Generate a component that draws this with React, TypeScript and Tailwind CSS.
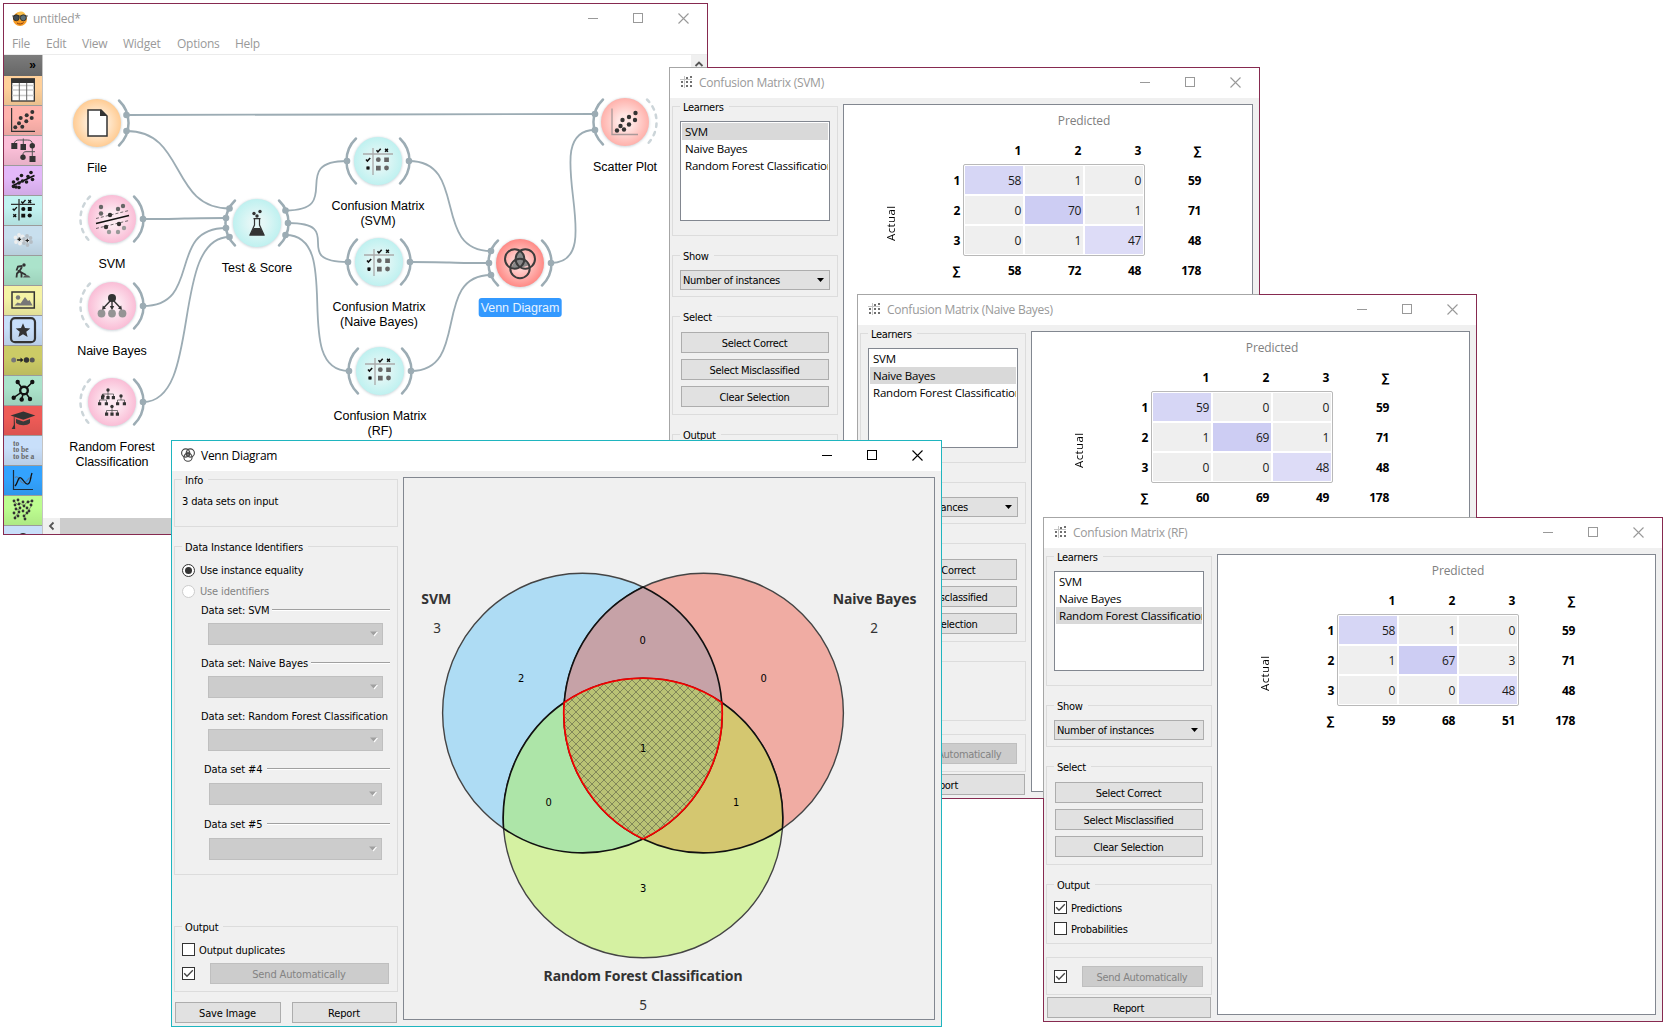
import React from "react";

const UI = "font-['DejaVu_Sans_Condensed','Noto_Sans',sans-serif] text-[11px] tracking-[-0.3px]";
const SEG = "font-['Open_Sans','Noto_Sans',sans-serif] text-[12px] tracking-[-0.26px]";

/* ---------- Shared controls ---------- */

function WindowControls() {
  return (
    <svg width="138" height="30" viewBox="0 0 138 30" className="ml-auto" fill="none" stroke="currentColor" shapeRendering="crispEdges">
      <path d="M19 14.5h10" />
      <rect x="64.5" y="9.5" width="9" height="9" />
      <path d="M109.5 9.5l10 10M119.5 9.5l-10 10" shapeRendering="auto" strokeWidth="1.1" />
    </svg>
  );
}

function Group({ title, className, children }: { title?: string; className: string; children?: React.ReactNode }) {
  return (
    <div className={`relative shrink-0 border border-[#dcdcdc] ${className}`}>
      {title && (
        <span className="absolute left-[7px] top-[-7px] bg-[#f0f0f0] pl-[3px] pr-[5px] leading-4 whitespace-nowrap">{title}</span>
      )}
      {children}
    </div>
  );
}

function Button({ children, className = "", disabled = false }: { children: React.ReactNode; className?: string; disabled?: boolean }) {
  return (
    <div
      className={`flex h-[21px] shrink-0 items-center justify-center border pt-[3px] pr-px ${
        disabled ? "border-[#bfbfbf] bg-[#cccccc] text-[#838383]" : "border-[#adadad] bg-[#e1e1e1]"
      } ${className}`}
    >
      {children}
    </div>
  );
}

function CheckBox({ checked = false }: { checked?: boolean }) {
  return (
    <span className="block size-[13px] shrink-0 border border-[#333] bg-white">
      {checked && (
        <svg viewBox="0 0 11 11" className="size-[11px]" fill="none" stroke="#444" strokeWidth="1.3">
          <path d="M1.2 5.3l2.8 3L9.8 2.2" />
        </svg>
      )}
    </span>
  );
}

/* ---------- Confusion matrix window ---------- */

function MatrixIcon() {
  return (
    <svg width="14" height="13" viewBox="0 0 14 13" fill="#707070" className="-mt-[2px]">
      <path d="M0 3.5h12M4.5 0v12" stroke="#c4c4c4" strokeWidth="1" />
      <path d="M6 1h2v2H6zM10 0h2v2h-2zM1 5h2v2H1zM6 5h2v2H6zM10 5h2v2h-2zM1 9h2v2H1zM6 9h2v2H6zM10 9h2v2h-2z" />
    </svg>
  );
}

const LEARNERS = ["SVM", "Naive Bayes", "Random Forest Classification"];
const DIAGONAL = ["bg-[#d6d6f5]", "bg-[#cdcdf3]", "bg-[#dddcf7]"];

function MatrixTable({ cells, sums }: { cells: number[][]; sums: number[] }) {
  const rowSums = [59, 71, 48];
  return (
    <div className="flex text-[12px] font-['Open_Sans','Noto_Sans',sans-serif]">
      <div className="flex w-[59px] justify-end pt-[61px]">
        <span className="mr-[4px] h-[115px] rotate-180 text-center text-[11.5px] tracking-[0.4px] [writing-mode:vertical-rl]">Actual</span>
      </div>
      <div className="w-[60px] pt-[62px] text-right font-bold">
        {["1", "2", "3", "∑"].map((h) => (
          <div key={h} className="h-[30px] pr-[3px] leading-[28px]">{h}</div>
        ))}
      </div>
      <div>
        <div className="h-[31px] pl-[2px] text-[#808080]">
          <div className="w-[238px] text-center leading-[31px] tracking-[-0.1px]">Predicted</div>
        </div>
        <div className="grid grid-cols-[60px_60px_60px_58px] pt-px text-right font-bold leading-[27px]">
          {["1", "2", "3", "∑"].map((h, i) => (
            <div key={h} className={`h-[27px] ${i === 3 ? "pr-0" : "pr-[2px]"}`}>{h}</div>
          ))}
        </div>
        <div className="flex">
          <div className="grid h-[92px] w-[182px] grid-cols-3 gap-[2px] rounded-[2px] border border-[#b9b9b9] p-px text-right text-[#1a1a1a]">
            {cells.flatMap((row, r) =>
              row.map((v, c) => (
                <div key={`${r}-${c}`} className={`h-[28px] pr-[2px] leading-[29px] tracking-[-0.3px] ${r === c ? DIAGONAL[r] : "bg-[#efefef]"}`}>{v}</div>
              )),
            )}
          </div>
          <div className="w-[56px] pt-[2px] text-right font-bold">
            {rowSums.map((v) => (
              <div key={v} className="h-[30px] leading-[29px]">{v}</div>
            ))}
          </div>
        </div>
        <div className="grid grid-cols-[60px_60px_60px_58px] text-right font-bold leading-[30px]">
          {sums.map((v, i) => (
            <div key={i} className={i === 3 ? "pr-0" : "pr-[2px]"}>{v}</div>
          ))}
        </div>
      </div>
    </div>
  );
}

function ConfusionWindow({ title, selected, frame, topSeam, leftSeam, cells, sums }: {
  title: string; selected: number; frame: string; topSeam: string; leftSeam: string; cells: number[][]; sums: number[];
}) {
  return (
    <div className={`absolute flex h-[505px] flex-col border border-[#862a50] bg-[#f0f0f0] ${frame}`}>
      {/* The frame turns grey where it lies over another window */}
      <div className={`absolute -left-px -top-px h-px bg-[#a6a6a6] ${topSeam}`} />
      <div className={`absolute -left-px -top-px w-px bg-[#a6a6a6] ${leftSeam}`} />
      <div className="flex h-[30px] shrink-0 items-center bg-white pl-[10px] text-[#999]">
        <MatrixIcon />
        <span className={`ml-[5px] whitespace-nowrap ${SEG}`}>{title}</span>
        <WindowControls />
      </div>
      <div className={`flex min-h-0 flex-1 pl-[2px] pr-[6px] ${UI}`}>
        <div className="flex w-[166px] shrink-0 flex-col pt-[8px]">
          <Group title="Learners" className="h-[130px] px-[7px] pt-[14px]">
            <div className="h-[100px] overflow-hidden border border-[#828790] bg-white p-px font-['Open_Sans','Noto_Sans',sans-serif] text-[11.5px] tracking-[-0.22px]">
              {LEARNERS.map((l, i) => (
                <div key={l} className={`h-[17px] overflow-hidden pl-[3px] leading-[17px] whitespace-nowrap ${i === selected ? "bg-[#d9d9d9]" : ""}`}>{l}</div>
              ))}
            </div>
          </Group>
          <Group title="Show" className="mt-[19px] h-[42px] px-[7px] pt-[14px]">
            <div className="flex h-[20px] items-center justify-between border border-[#adadad] bg-[#e1e1e1] pl-[2px] pr-[5px]">
              <span className="pt-[2px]">Number of instances</span>
              <svg width="7" height="4" viewBox="0 0 7 4"><path d="M0 0h7L3.5 4z" /></svg>
            </div>
          </Group>
          <Group title="Select" className="mt-[19px] flex h-[99px] flex-col gap-[6px] px-[8px] pt-[15px]">
            <Button>Select Correct</Button>
            <Button>Select Misclassified</Button>
            <Button>Clear Selection</Button>
          </Group>
          <Group title="Output" className="mt-[19px] flex h-[60px] flex-col gap-[8px] pl-[7px] pt-[16px]">
            <div className="flex h-[13px] items-center gap-[4px]"><CheckBox checked /><span className="pt-[3px]">Predictions</span></div>
            <div className="flex h-[13px] items-center gap-[4px]"><CheckBox /><span className="pt-[3px]">Probabilities</span></div>
          </Group>
          <Group className="mt-[13px] flex h-[38px] px-[7px] pt-[8px]">
            <div className="flex h-[21px] items-center gap-[15px]">
              <CheckBox checked />
              <Button disabled className="w-[121px]">Send Automatically</Button>
            </div>
          </Group>
          <Button className="mx-px mt-[2px]">Report</Button>
        </div>
        <div className="ml-[5px] mt-[6px] h-[461px] min-w-0 flex-1 border border-[#828790] bg-white">
          <MatrixTable cells={cells} sums={sums} />
        </div>
      </div>
    </div>
  );
}

/* ---------- Venn diagram window ---------- */

function VennIcon() {
  return (
    <svg width="14" height="14" viewBox="0 0 14 14" fill="none" stroke="#444" strokeWidth="1.1" className="-mt-[2px]">
      <path d="M7 3.2a4.2 4.2 0 0 1 2 5 4.2 4.2 0 0 1-4 0 4.2 4.2 0 0 1 2-5z" fill="#777" stroke="none" />
      <circle cx="4.7" cy="5" r="4.1" />
      <circle cx="9.3" cy="5" r="4.1" />
      <circle cx="7" cy="9.2" r="4.1" />
    </svg>
  );
}

function DataSet({ label, compact = false, className = "" }: { label: string; compact?: boolean; className?: string }) {
  return (
    <div className={className}>
      <div className={`flex h-[14px] items-center gap-[3px] ${compact ? "pl-[29px]" : "pl-[26px]"} pr-[7px]`}>
        <span className="shrink-0 pt-[2px] leading-[14px] tracking-[-0.12px] whitespace-nowrap">{label}</span>
        <span className={`h-[2px] flex-1 border-b border-white bg-[#a0a0a0] ${compact ? "ml-[2px]" : ""}`} />
      </div>
      <div className={`flex h-[22px] items-center justify-end border border-[#bfbfbf] bg-[#cccccc] pr-[4px] ${compact ? "ml-[34px] mt-[7px] w-[173px]" : "ml-[33px] mt-[6px] w-[175px]"}`}>
        <svg width="8" height="6" viewBox="0 0 8 6"><path d="M1 1h7L4.5 5.5z" fill="#fff" /><path d="M0 .5h7L3.5 4.5z" fill="#a0a0a0" /></svg>
      </div>
    </div>
  );
}

function VennChart() {
  const a = "139.8 139.8 0 0";
  return (
    <svg width="530" height="541" viewBox="404 478 530 541">
      <defs>
        <pattern id="hatch" width="8" height="8" patternUnits="userSpaceOnUse">
          <path d="M0 0l8 8M8 0l-8 8" stroke="#7a8056" strokeWidth=".9" />
        </pattern>
      </defs>
      <g stroke="#444" strokeWidth="1.4">
        <circle cx="582.4" cy="713" r="139.8" fill="#aedcf4" />
        <circle cx="703.6" cy="713" r="139.8" fill="#f0aca3" />
        <circle cx="643" cy="818" r="139.8" fill="#d5f1a2" />
      </g>
      <g stroke="#111" strokeWidth="1.6" strokeLinejoin="round">
        <path d={`M643 587A${a} 1 721.8 702.5A${a} 0 564.2 702.5A${a} 1 643 587Z`} fill="#c6a2a7" />
        <path d={`M503.6 828.5A${a} 1 564.2 702.5A${a} 0 643 839A${a} 1 503.6 828.5Z`} fill="#ade5a8" />
        <path d={`M782.4 828.5A${a} 0 721.8 702.5A${a} 1 643 839A${a} 0 782.4 828.5Z`} fill="#d4c770" />
      </g>
      <path d={`M564.2 702.5A${a} 1 721.8 702.5A${a} 1 643 839A${a} 1 564.2 702.5Z`} fill="#b9c275" />
      <path d={`M564.2 702.5A${a} 1 721.8 702.5A${a} 1 643 839A${a} 1 564.2 702.5Z`} fill="url(#hatch)" stroke="#f00000" strokeWidth="1.8" />
      <g textAnchor="middle" className="font-['DejaVu_Sans_Condensed','Noto_Sans',sans-serif] text-[11px]">
        <text x="521" y="682">2</text>
        <text x="642.5" y="644">0</text>
        <text x="763.5" y="682">0</text>
        <text x="643" y="752">1</text>
        <text x="548.5" y="806">0</text>
        <text x="736" y="806">1</text>
        <text x="643" y="892">3</text>
      </g>
      <g textAnchor="middle" fill="#333" className="font-['Noto_Sans',sans-serif]">
        <g fontWeight="700" className="text-[14px] tracking-[-0.12px]">
          <text x="436.2" y="604">SVM</text>
          <text x="874.5" y="604">Naive Bayes</text>
          <text x="643" y="980.5">Random Forest Classification</text>
        </g>
        <g className="text-[13.5px]">
          <text x="437" y="633">3</text>
          <text x="874" y="633">2</text>
          <text x="643" y="1010">5</text>
        </g>
      </g>
    </svg>
  );
}

function VennWindow() {
  return (
    <div className="absolute left-[171px] top-[440px] flex h-[587px] w-[771px] flex-col border border-[#1fb5bf] bg-[#f0f0f0]">
      <div className="flex h-[30px] shrink-0 items-center bg-white pl-[9px]">
        <VennIcon />
        <span className={`ml-[6px] ${SEG}`}>Venn Diagram</span>
        <WindowControls />
      </div>
      <div className={`flex pl-[2px] ${UI}`}>
        <div className="flex w-[224px] shrink-0 flex-col pt-[8px] tracking-[-0.15px]">
          <Group title="Info" className="h-[48px] pl-[7px] pt-[14px]">
            <div className="leading-4">3 data sets on input</div>
          </Group>
          <Group title="Data Instance Identifiers" className="mt-[19px] h-[329px] pt-[16px]">
            <div className="flex h-[14px] items-center pl-[7px]">
              <span className="flex size-[13px] items-center justify-center rounded-full border border-[#333] bg-white"><span className="size-[7px] rounded-full bg-[#333]" /></span>
              <span className="ml-[5px] pt-[2px]">Use instance equality</span>
            </div>
            <div className="mt-[7px] flex h-[14px] items-center pl-[7px] text-[#838383]">
              <span className="size-[13px] rounded-full border border-[#ccc] bg-white" />
              <span className="ml-[5px] pt-[2px]">Use identifiers</span>
            </div>
            <DataSet label="Data set: SVM" className="mt-[5px]" />
            <DataSet label="Data set: Naive Bayes" className="mt-[11px]" />
            <DataSet label="Data set: Random Forest Classification" className="mt-[11px]" />
            <DataSet label="Data set #4" compact className="mt-[11px]" />
            <DataSet label="Data set #5" compact className="mt-[12px]" />
          </Group>
          <Group title="Output" className="mt-[51px] h-[66px] pl-[7px] pt-[16px]">
            <div className="flex h-[13px] items-center gap-[4px]"><CheckBox /><span className="pt-[3px]">Output duplicates</span></div>
            <div className="mt-[7px] flex h-[21px] items-center gap-[15px]">
              <CheckBox checked />
              <Button disabled className="w-[179px]">Send Automatically</Button>
            </div>
          </Group>
          <div className="mt-[10px] flex gap-[11px] pl-px">
            <Button className="w-[106px] pr-[3px]">Save Image</Button>
            <Button className="w-[105px]">Report</Button>
          </div>
        </div>
        <div className="ml-[5px] mt-[6px] h-[543px] w-[532px] border border-[#828790]">
          <VennChart />
        </div>
      </div>
    </div>
  );
}

/* ---------- Canvas window ---------- */

const INK = "#333";
const check = (x: number, y: number) => `M${x - 2} ${y}l1.4 1.6 2.8-3.2`;
const cross = (x: number, y: number) => `M${x - 1.4} ${y - 1.4}l2.8 2.8M${x + 1.4} ${y - 1.4}l-2.8 2.8`;
const dots = (pts: number[][], r: number, fill = INK) => pts.map(([x, y], i) => <circle key={i} cx={x} cy={y} r={r} fill={fill} />);

const TOOLS: { bg: string; icon: React.ReactNode }[] = [
  {
    bg: "bg-[#ffd09a]",
    icon: (
      <>
        <rect x=".7" y="0" width="22.6" height="22" fill="#fff" stroke={INK} strokeWidth="1.3" />
        <path d="M1 6.5h22M1 11h22M1 16.5h22" stroke="#ccc" strokeWidth="1.4" />
        <path d="M8.3 3v19M15.7 3v19" stroke="#666" strokeWidth="1" />
        <path d="M0-.6h24v4.6H0z" fill={INK} />
      </>
    ),
  },
  {
    bg: "bg-[#ffb3ad]",
    icon: (
      <>
        <path d="M.6-1v23.3H24" fill="none" stroke={INK} strokeWidth="1.2" />
        {dots([[4.3, 18.3], [8, 14.3], [11.3, 17.7], [9.7, 9], [15.3, 12.3], [15.7, 6.3], [20.7, 9], [21.3, 3]], 2)}
      </>
    ),
  },
  {
    bg: "bg-[#fbbfd8]",
    icon: (
      <>
        <path d="M12.3-.5v6M3.3 5c0-3 2-4 5-4h8c3 0 5 1 5 4v12M12 16c0-2.500 1-3.300 3-3.300h9" fill="none" stroke="#555" strokeWidth="1" />
        <path d="M.3 4h6v6h-6zM9.500 5h5.500v6h-5.500zM18.500 17h6v6h-6z" fill={INK} />
        {dots([[21.3, 6.7], [12, 18.3]], 2.7)}
      </>
    ),
  },
  {
    bg: "bg-[#e3b8f9]",
    icon: (
      <>
        <path d="M1 17L23.500 6.500" stroke="#111" strokeWidth="1.500" />
        {dots([[2.5, 13], [5, 18], [8, 18.5], [6.5, 10], [10.5, 6.5], [11.5, 12], [15.5, 13], [17, 7.5], [20, 3.5], [21.5, 10.5], [2.5, 17.5], [8, 14]], 1.8, "#1c1c1c")}
      </>
    ),
  },
  {
    bg: "bg-[#c1f2f1]",
    icon: (
      <>
        <path d="M8 0v21.500M0 5.300h24" stroke={INK} strokeWidth="1.300" />
        <path d={check(12.3, 2.5) + check(3.7, 9.7) + cross(18.7, 2.5) + cross(3.7, 16.7)} fill="none" stroke="#111" strokeWidth="1.400" />
        {dots([[12.3, 10], [18.7, 16.5]], 2.1, "#111")}
        <path d="M16.800 8h3.900v3.900h-3.900zM10.300 14.700h3.900v3.900h-3.900z" fill="#111" />
      </>
    ),
  },
  {
    bg: "bg-[#c8dfee]",
    icon: (
      <>
        {dots([[8, 6], [4.5, 8.5], [5, 13], [9, 14.5], [12, 12], [11.5, 7.5]], 1.9, "#eee")}
        {dots([[16, 7], [19.5, 9], [20, 13], [16.5, 16], [13, 14], [13, 10]], 1.9, "#b5bdc4")}
        {dots([[8.3, 10.3], [16.3, 11.5]], 2.2, "#ddd")}
        <path d="M8.300 8.500v3.600M6.500 10.300h3.600M16.300 9.700v3.600M14.500 11.500h3.600" stroke="#222" strokeWidth="1.200" />
      </>
    ),
  },
  {
    bg: "bg-[#abe3cb]",
    icon: (
      <>
        <circle cx="13" cy="6" r="1.700" fill={INK} />
        <path d="M11.500 7L7 7.500l-1.500 4M11 8l-2.500 4 2 2v4.500M8.500 12l-2.500 2.500-.5 4M7 11.500l8 4.500" fill="none" stroke={INK} strokeWidth="1.800" />
        <path d="M12 18.500c1.500-3 4.500-3.500 7.500 0z" fill="#555" />
      </>
    ),
  },
  {
    bg: "bg-[#f5f3a5]",
    icon: (
      <>
        <rect x="1" y="3" width="22.300" height="16" fill="none" stroke={INK} strokeWidth="1.500" />
        <circle cx="7" cy="8.500" r="2.200" fill="#777" />
        <path d="M3.500 16.500l3-3 3 1 4.500-6.500 3 4 1.500-1 3 5.500z" fill="#777" />
      </>
    ),
  },
  {
    bg: "bg-[#c8dffa]",
    icon: (
      <>
        <rect x="0" y="-.8" width="24" height="24" rx="4" fill="none" stroke={INK} strokeWidth="2.200" />
        <path d="M12 4.200l2 4.800 5.300.4-4 3.400 1.300 5.200-4.600-2.800-4.600 2.800 1.300-5.200-4-3.400 5.300-.4z" fill={INK} />
      </>
    ),
  },
  {
    bg: "bg-[#cccb66]",
    icon: (
      <>
        <circle cx="2.700" cy="11" r="2.500" fill="#777" />
        <path d="M6 11h4.500" stroke="#222" strokeWidth="1.500" />
        <path d="M9.500 8.500l3 2.500-3 2.500z" fill="#222" />
        {dots([[15.5, 11]], 2.7)}
        <circle cx="21.200" cy="11" r="2.500" fill="#555" />
      </>
    ),
  },
  {
    bg: "bg-[#abe3cb]",
    icon: (
      <>
        <path d="M6.700 3.300L13 11.500 21.300 3.300M13 11.500L2.700 18.700M13 11.500L19 19.700M13 11.500l-2.300 8.500" stroke="#111" strokeWidth="1.500" fill="none" />
        <circle cx="13" cy="11.500" r="3.800" fill="#abe3cb" stroke="#111" strokeWidth="2.400" />
        {dots([[6.7, 3], [21.3, 3], [2.7, 18.7], [10.7, 20.5], [19, 20]], 2.2, "#111")}
      </>
    ),
  },
  {
    bg: "bg-[#ee5b57]",
    icon: (
      <>
        <path d="M-.5 6.500L12.300 2.500l12 4-12 4.200z" fill={INK} />
        <path d="M5 10l7.300 2.500L19 10v4c-3 3-10 3-14 0z" fill="#3a3a3a" />
        <path d="M2.800 8v8l-2.100 4h3.500L3.500 8z" fill={INK} />
      </>
    ),
  },
  {
    bg: "bg-[#c8dffa]",
    icon: (
      <g fill="#666" fontWeight="700" className="font-['Liberation_Serif',serif] text-[7.500px]">
        <text x="2" y="6.500">to</text>
        <text x="2" y="13">to be</text>
        <text x="2" y="20">to be a</text>
      </g>
    ),
  },
  {
    bg: "bg-[#33a3ff]",
    icon: (
      <>
        <path d="M2.500 1v19.500H22" fill="none" stroke="#1c2b3a" strokeWidth="1.200" />
        <path d="M4 9c3-5 5 6 9 5s4-7 8-5" fill="none" stroke="#5b80a5" strokeWidth="1.200" />
        <path d="M4 17C7 14 7 7 10 9s4 7 7 6 2-6 4-11" fill="none" stroke="#111" strokeWidth="1.300" />
      </>
    ),
  },
  {
    bg: "bg-[#bdfd90]",
    icon: (
      <>
        <path d="M3 2l4 4 2-2 4 3 2-3 5-2M4 10l3 1 2-2M4 18l3-4M13 17l3-3 3-5 2-3" fill="none" stroke="#555" strokeWidth=".6" />
        {dots([[3, 2], [7, 1], [4, 6], [8, 5], [12, 3], [17, 3], [21, 2], [13, 7], [20, 6], [5, 10], [9, 9], [16, 9], [3, 14], [8, 13], [12, 12], [18, 12], [4, 19], [7, 17], [13, 17], [16, 14], [14, 20]], 1.4)}
      </>
    ),
  },
  { bg: "bg-[#c8dffa]", icon: <path d="M8 6.500c1-3.500 7-3.500 8 0z" fill={INK} /> },
];

function ToolStrip() {
  return (
    <div className="flex w-[39px] shrink-0 flex-col overflow-hidden border-r border-[#c4c4c4]">
      <div className="flex h-[21px] shrink-0 items-center justify-end bg-linear-to-b from-[#7c7c7c] to-[#666] pr-[6px] pb-px font-['Liberation_Sans',sans-serif] text-[12px] font-bold text-black">»</div>
      {TOOLS.map((t, i) => (
        <div key={i} className={`h-[30px] shrink-0 border-b border-[#9b9b9b] ${t.bg}`}>
          <div className="h-full bg-linear-to-b from-black/0 from-40% to-black/8 pl-[7px] pt-[3px]">
            <svg width="24" height="24" viewBox="0 0 24 24" className="overflow-visible">{t.icon}</svg>
          </div>
        </div>
      ))}
    </div>
  );
}

function MatrixGlyph() {
  return (
    <>
      <path d="M-5-13v27M-15-7h30" stroke="#aaa" strokeWidth="1.300" />
      <path d={check(0.5, -10.7) + check(-10, -1.5) + cross(8.5, -10.7) + cross(-10, 7)} fill="none" stroke="#111" strokeWidth="1.500" />
      <circle cx="0.300" cy="-1.300" r="2.400" fill="#666" />
      <circle cx="8.500" cy="7" r="2.400" fill="#666" />
      <path d="M6.200-3.600h4.700v4.700H6.200zM-2 4.700h4.700v4.700H-2z" fill="#666" />
    </>
  );
}

function ForestTree({ x, y, wide = false }: { x: number; y: number; wide?: boolean }) {
  return (
    <g transform={`translate(${x} ${y})`}>
      <path d={wide ? "M0-4v6M-5.5 4V0H5.5v4" : "M0-3v3M-3.5 4V0H3.5v4"} fill="none" stroke="#555" strokeWidth=".8" />
      <circle cy="-4" r="1.700" fill={INK} />
      <path d={wide ? "M-7 2h3.2v3.200H-7zM-1.600 2h3.200v3.200h-3.200zM3.800 2H7v3.200H3.800z" : "M-5 2.300h3.200v3H-5zM1.800 2.300H5v3H1.800z"} fill={INK} />
    </g>
  );
}

type Side = "none" | "open" | "linked";
const NODES: { x: number; y: number; tone: string; left: Side; right: Side; label: string[]; glyph: React.ReactNode; active?: boolean }[] = [
  { x: 97, y: 123, tone: "orange", left: "none", right: "linked", label: ["File"], glyph: <><path d="M-9-13H4L10-7V13H-9z" fill="#fff" stroke={INK} strokeWidth="1.500" /><path d="M3-13.500V-7h7z" fill={INK} /></> },
  {
    x: 112, y: 219, tone: "pink", left: "open", right: "linked", label: ["SVM"],
    glyph: <>
      <path d="M-16 4.500L17-3.500" stroke="#111" strokeWidth="1.500" />
      <path d="M-16-.5L17-8.500M-16 9.500L17 1.500" stroke="#333" strokeWidth=".7" strokeDasharray="3 2" />
      {dots([[-2, -4], [7, 5], [-6, 8]], 2.2)}{dots([[-11, -12], [-11, -5.5], [6, -10], [11, -13]], 2.2, "#666")}{dots([[-3, 13], [6, 13], [12, 9]], 2.2, "#999")}
    </>,
  },
  {
    x: 112, y: 306, tone: "pink", left: "open", right: "linked", label: ["Naive Bayes"],
    glyph: <>
      <path d="M0-7L-8.500 2M0-7V2M0-7L8.500 2" stroke={INK} strokeWidth="1.400" />
      <path d="M-10 4l.8-4.500L-6 2.500zM-2.200 0h4.400L0 4.200zM10 4L9.200-.5 6 2.500z" fill={INK} />
      {dots([[0, -8]], 4)}{dots([[-10.5, 7.5], [0, 7.5], [10.5, 7.5]], 3.9, "#949494")}
    </>,
  },
  { x: 112, y: 402, tone: "pink", left: "open", right: "linked", label: ["Random Forest", "Classification"], glyph: <><ForestTree x={-4} y={-8} wide /><ForestTree x={-9} y={-2} /><ForestTree x={9} y={-2} /><ForestTree x={0} y={8.5} wide /></> },
  {
    x: 257, y: 223, tone: "cyan", left: "linked", right: "linked", label: ["Test & Score"],
    glyph: <>
      <path d="M-2.500-4.500V2L-7 12h14L2.500 2v-6.500" fill="none" stroke={INK} strokeWidth="1.200" />
      <path d="M-3.500 5h7L7.500 12.500h-15zM-3.500-5h7v1.300h-7z" fill={INK} />
      {dots([[3, -11.5], [-3, -9.5], [0, -7]], 1.7)}
    </>,
  },
  { x: 378, y: 161, tone: "cyan", left: "linked", right: "linked", label: ["Confusion Matrix", "(SVM)"], glyph: <MatrixGlyph /> },
  { x: 379, y: 262, tone: "cyan", left: "linked", right: "linked", label: ["Confusion Matrix", "(Naive Bayes)"], glyph: <MatrixGlyph /> },
  { x: 380, y: 371, tone: "cyan", left: "linked", right: "linked", label: ["Confusion Matrix", "(RF)"], glyph: <MatrixGlyph /> },
  {
    x: 520, y: 263, tone: "red", left: "linked", right: "linked", label: ["Venn Diagram"], active: true,
    glyph: <>
      <path d="M0-12a9.500 9.500 0 0 1 4 9.500 9.500 9.500 0 0 1 4.500 5L0 5l-8.500 1a9.500 9.500 0 0 1 4.500-8A9.500 9.500 0 0 1 0-12z" fill="#888" />
      <g fill="none" stroke="#3c3c3c" strokeWidth="2"><circle cx="-5.300" cy="-4" r="9.700" /><circle cx="5.300" cy="-4" r="9.700" /><circle cy="5.500" r="9.700" /></g>
    </>,
  },
  {
    x: 625, y: 122, tone: "rose", left: "linked", right: "open", label: ["Scatter Plot"],
    glyph: <><path d="M-13-13.500v26h26" fill="none" stroke="#a99" strokeWidth="1.300" />{dots([[-8, 8.5], [-4.5, 4], [-1, 7.5], [-2.5, -2], [4, 2.5], [4, -5], [10, -2], [10.5, -9]], 2.2)}</>,
  },
];

const TONES: [string, string, string][] = [
  ["orange", "#fff1e0", "#ffcc94"],
  ["pink", "#fdeaf2", "#fabdd6"],
  ["cyan", "#e4f7f6", "#bff1f0"],
  ["red", "#ffd0cd", "#ff8a86"],
  ["rose", "#ffe5e3", "#ffb1ab"],
];

const LINKS: [number, number, number, number][] = [
  [126.5, 115, 595, 114], [126.5, 131, 229.5, 208.5], [143, 219, 226, 218], [143, 306, 226, 228], [143, 402, 229.5, 237],
  [285.5, 210.5, 347, 161], [288, 223, 348, 262], [285.5, 235, 349, 371],
  [409, 161, 491, 251], [410, 262, 489, 263], [411, 371, 491, 275], [551, 263, 595, 130],
];

function Workflow() {
  const arc = "M22-22.500A31.300 31.300 0 0 1 22 22.500";
  return (
    <div className="relative h-full w-full overflow-hidden">
      <svg width="648" height="463" viewBox="43 55 648 463" className="block">
        <defs>
          {TONES.map(([id, inner, outer]) => (
            <radialGradient key={id} id={id}><stop offset="0" stopColor={inner} /><stop offset=".3" stopColor={inner} /><stop offset="1" stopColor={outer} /></radialGradient>
          ))}
          <filter id="soft" x="-20%" y="-20%" width="140%" height="140%"><feGaussianBlur stdDeviation="1.200" /></filter>
        </defs>
        <g fill="none" stroke="#9cacb4" strokeWidth="1.800">
          {LINKS.map(([a, b, c, d], i) => <path key={i} d={`M${a} ${b}C${a + 60} ${b} ${c - 60} ${d} ${c} ${d}`} />)}
        </g>
        {LINKS.flatMap(([a, b, c, d], i) => [<circle key={`s${i}`} cx={a} cy={b} r="3.300" fill="#9cacb4" />, <circle key={`e${i}`} cx={c} cy={d} r="3.300" fill="#9cacb4" />])}
        {NODES.map((n, i) => (
          <g key={i} transform={`translate(${n.x} ${n.y})`}>
            <circle r="24.500" cy=".5" fill="#a9b8c0" opacity=".55" filter="url(#soft)" />
            <circle r="24" fill={`url(#${n.tone})`} />
            {n.glyph}
            <g fill="none" strokeLinecap="round" strokeWidth="2.500">
              {n.right !== "none" && <path d={arc} stroke={n.right === "open" ? "#ccd5d9" : "#9cacb4"} strokeDasharray={n.right === "open" ? "3.5 5.300" : undefined} />}
              {n.left !== "none" && <path d={arc} transform="scale(-1 1)" stroke={n.left === "open" ? "#ccd5d9" : "#9cacb4"} strokeDasharray={n.left === "open" ? "3.5 5.300" : undefined} />}
            </g>
          </g>
        ))}
      </svg>
      {NODES.map((n, i) => (
        <div
          key={i}
          className="absolute flex -translate-x-1/2 flex-col items-center font-['Liberation_Sans',sans-serif] text-[12.500px] leading-[15px] tracking-[-0.05px] whitespace-nowrap"
          style={{ left: n.x - 43, top: n.y - 55 + 38 }}
        >
          {n.active ? (
            <span className="-mt-[3px] h-[19px] rounded-[3px] bg-[#3399ff] px-[2px] leading-[20px] text-[#e6f2ff]">{n.label[0]}</span>
          ) : (
            n.label.map((l) => <span key={l}>{l}</span>)
          )}
        </div>
      ))}
    </div>
  );
}

function MainWindow() {
  return (
    <div className="absolute left-[3px] top-[3px] flex h-[532px] w-[705px] flex-col border border-[#862a50] bg-white">
      <div className="flex h-[30px] shrink-0 items-center pl-[8px] text-[#999]">
        <svg width="16" height="16" viewBox="0 0 16 16" className="-mt-px">
          <circle cx="8" cy="8" r="7" fill="#f59a23" />
          <circle cx="9" cy="5" r="4.500" fill="#fbc04a" />
          <path d="M.3 4.500h15.400v1H.3z" fill="#333" />
          <circle cx="4.300" cy="6.800" r="3" fill="#3f4a50" stroke="#222" strokeWidth=".8" />
          <circle cx="11.300" cy="6.800" r="3" fill="#5e7178" stroke="#222" strokeWidth=".8" />
          <path d="M5 12c2 1.500 5 1.300 6.500-.5" stroke="#8a3b10" fill="none" />
        </svg>
        <span className={`ml-[5px] ${SEG}`}>untitled*</span>
        <WindowControls />
      </div>
      <div className={`flex h-[21px] shrink-0 items-center border-b border-[#ececec] pl-[8px] text-[#999] ${SEG}`}>
        <span className="w-[34px]">File</span>
        <span className="w-[36px]">Edit</span>
        <span className="w-[41px]">View</span>
        <span className="w-[54px]">Widget</span>
        <span className="w-[58px]">Options</span>
        <span>Help</span>
      </div>
      <div className="flex min-h-0 flex-1">
        <ToolStrip />
        <div className="flex min-w-0 flex-1 flex-col">
          <div className="flex min-h-0 flex-1">
            <div className="min-w-0 flex-1"><Workflow /></div>
            <div className="w-[16px] shrink-0 bg-[#f0f0f0] pt-[4px]">
              <svg width="16" height="10" viewBox="0 0 16 10" fill="none" stroke="#555" strokeWidth="1.800"><path d="M4.500 7L8 3.500 11.500 7" /></svg>
            </div>
          </div>
          <div className="flex h-[16px] shrink-0 bg-[#cdcdcd]">
            <div className="flex w-[17px] items-center justify-center bg-[#f0f0f0]">
              <svg width="10" height="10" viewBox="0 0 10 10" fill="none" stroke="#555" strokeWidth="1.800"><path d="M6.500 1.500L3 5l3.500 3.500" /></svg>
            </div>
          </div>
        </div>
      </div>
    </div>
  );
}

export default function App() {
  return (
    <div className="relative h-[1030px] w-[1666px] overflow-hidden bg-white text-black">
      <MainWindow />
      <ConfusionWindow
        title="Confusion Matrix (SVM)" selected={0}
        frame="left-[669px] top-[67px] w-[591px]" topSeam="w-[38px]" leftSeam="h-[468px]"
        cells={[[58, 1, 0], [0, 70, 1], [0, 1, 47]]} sums={[58, 72, 48, 178]}
      />
      <ConfusionWindow
        title="Confusion Matrix (Naive Bayes)" selected={1}
        frame="left-[857px] top-[294px] w-[620px]" topSeam="w-[402px]" leftSeam="h-[277px]"
        cells={[[59, 0, 0], [1, 69, 1], [0, 0, 48]]} sums={[60, 69, 49, 178]}
      />
      <ConfusionWindow
        title="Confusion Matrix (RF)" selected={2}
        frame="left-[1043px] top-[517px] w-[620px]" topSeam="w-[433px]" leftSeam="h-[281px]"
        cells={[[58, 1, 0], [1, 67, 3], [0, 0, 48]]} sums={[59, 68, 51, 178]}
      />
      <VennWindow />
    </div>
  );
}
